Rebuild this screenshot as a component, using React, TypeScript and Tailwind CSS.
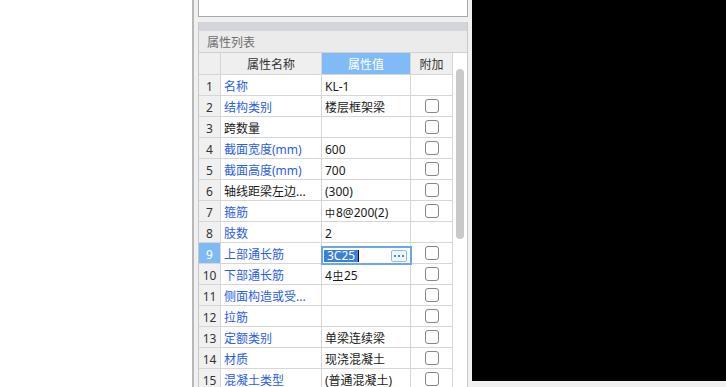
import React from "react";

type Row = {
  n: number;
  name: string;
  blue: boolean;
  value?: React.ReactNode;
  cb: boolean;
  editor?: boolean;
};

const Rebar1 = () => (
  <span className="mr-[1px] inline-block text-[10px] leading-[10px]">中</span>
);
const Rebar2 = () => (
  <span className="mx-[1px] inline-block border-b border-[#1a1a1a] text-[10px] leading-[9px]">中</span>
);

const rows: Row[] = [
  { n: 1, name: "名称", blue: true, value: "KL-1", cb: false },
  { n: 2, name: "结构类别", blue: true, value: "楼层框架梁", cb: true },
  { n: 3, name: "跨数量", blue: false, value: "", cb: true },
  { n: 4, name: "截面宽度(mm)", blue: true, value: "600", cb: true },
  { n: 5, name: "截面高度(mm)", blue: true, value: "700", cb: true },
  { n: 6, name: "轴线距梁左边...", blue: false, value: "(300)", cb: true },
  {
    n: 7,
    name: "箍筋",
    blue: true,
    value: (
      <>
        <Rebar1 />
        8@200(2)
      </>
    ),
    cb: true,
  },
  { n: 8, name: "肢数", blue: true, value: "2", cb: false },
  { n: 9, name: "上部通长筋", blue: true, editor: true, cb: true },
  {
    n: 10,
    name: "下部通长筋",
    blue: true,
    value: (
      <>
        4<Rebar2 />
        25
      </>
    ),
    cb: true,
  },
  { n: 11, name: "侧面构造或受...", blue: true, value: "", cb: true },
  { n: 12, name: "拉筋", blue: true, value: "", cb: true },
  { n: 13, name: "定额类别", blue: true, value: "单梁连续梁", cb: true },
  { n: 14, name: "材质", blue: true, value: "现浇混凝土", cb: true },
  { n: 15, name: "混凝土类型", blue: true, value: "(普通混凝土)", cb: true },
];

const cell = "border-r border-b border-[#d6d6d6]";

function Editor() {
  return (
    <div className="absolute -left-[1px] top-[3px] -right-[2px] -bottom-[2px] z-10 flex items-center border-2 border-[#6aa8ec] bg-white">
      <span className="ml-[1px] flex h-[12px] items-center bg-[#3a7fd8] px-[3px] pt-[1px] text-[12px] leading-[12px] text-white">
        3C25
      </span>
      <span className="h-[12px] w-[1px] bg-black" />
      <span className="ml-auto mr-[3px] flex h-[12px] w-[16px] items-center justify-center gap-[2px] rounded-[2px] border border-[#8ebdf0] bg-[#f1f7fe]">
        <span className="h-[2px] w-[2px] bg-[#4a8ae0]" />
        <span className="h-[2px] w-[2px] bg-[#4a8ae0]" />
        <span className="h-[2px] w-[2px] bg-[#4a8ae0]" />
      </span>
    </div>
  );
}

export default function App() {
  return (
    <div
      className="flex h-[387px] w-[726px] overflow-hidden bg-white text-[12px] text-[#1a1a1a]"
      style={{ fontFamily: '"Noto Sans", "Noto Sans CJK SC", sans-serif' }}
    >
      <div className="w-[192px] bg-white" />
      <div className="w-[2px] bg-[#b8b8b8]" />
      <div className="flex w-[278px] flex-col bg-[#f0f0f0] px-[4px]">
        <div className="h-[17px] shrink-0 border-x border-b border-[#a9a9a9] bg-white" />
        <div className="h-[5px] shrink-0" />
        <div className="flex flex-1 flex-col border-x border-[#c8c8c8] bg-white">
          <div className="h-[9px] shrink-0 bg-[#d4d5da]" />
          <div className="flex h-[22px] shrink-0 items-center border-b border-[#d0d0d0] bg-[#ebebeb] pl-[8px] pt-[2px] text-[#6e6e6e]">
            属性列表
          </div>
          <div className="flex">
            <div className="flex w-[254px] flex-col">
              <div className="flex h-[22px] bg-[#efefef] text-[#333]">
                <div className={`${cell} w-[22px]`} />
                <div className={`${cell} flex w-[101px] items-center justify-center pt-[3px]`}>属性名称</div>
                <div className={`${cell} flex w-[89px] items-center justify-center bg-[#80bbf7] pt-[3px] text-white`}>
                  属性值
                </div>
                <div className={`${cell} flex w-[42px] items-center justify-center pt-[3px]`}>附加</div>
              </div>
              {rows.map((r) => (
                <div key={r.n} className="flex h-[21px] shrink-0">
                  <div
                    className={`${cell} flex w-[22px] items-center justify-center pt-[3px] ${
                      r.editor ? "bg-[#7fbaf4] text-white" : "bg-[#f0f0f0] text-[#333]"
                    }`}
                  >
                    {r.n}
                  </div>
                  <div
                    className={`${cell} flex w-[101px] items-center whitespace-nowrap pl-[3px] pt-[3px] ${
                      r.blue ? "text-[#2a5de8]" : "text-[#1a1a1a]"
                    }`}
                  >
                    {r.name}
                  </div>
                  <div className={`${cell} relative flex w-[89px] items-center whitespace-nowrap pl-[3px] pt-[3px]`}>
                    {r.editor ? <Editor /> : r.value}
                  </div>
                  <div className={`${cell} flex w-[42px] items-center justify-center`}>
                    {r.cb && (
                      <span className="h-[14px] w-[14px] rounded-[3px] border border-[#858585] bg-white" />
                    )}
                  </div>
                </div>
              ))}
            </div>
            <div className="flex w-[14px] flex-col bg-white pl-[3px] pt-[16px]">
              <div className="h-[170px] w-[8px] rounded-full bg-[#c9c9c9]" />
            </div>
          </div>
        </div>
      </div>
      <div className="flex flex-1 flex-col bg-[#f0f0f0]">
        <div className="h-[381px] bg-black" />
      </div>
    </div>
  );
}
